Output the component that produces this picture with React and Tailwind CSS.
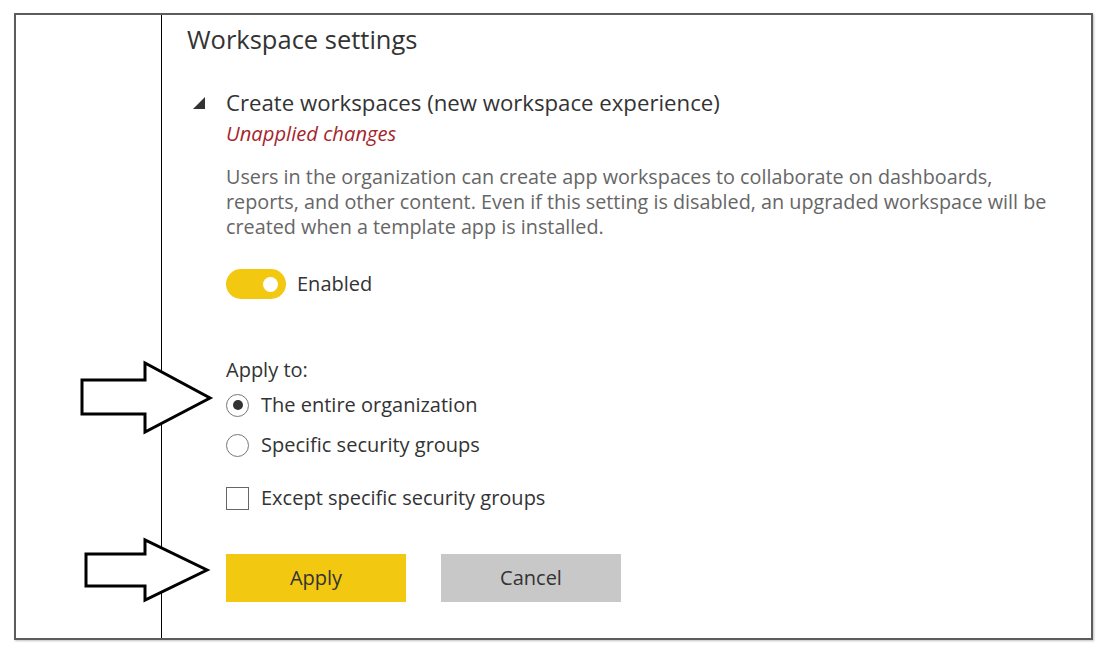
import React, { useState } from 'react';

const font = { fontFamily: '"Open Sans", "Noto Sans", sans-serif' };

const Radio = ({ checked, label, onClick }) => (
  <button type="button" onClick={onClick} className="flex items-center h-[26px] text-left">
    <span className="w-[23px] h-[23px] rounded-full border border-[#777] bg-white flex items-center justify-center">
      {checked && <span className="w-[10px] h-[10px] rounded-full bg-[#333]" />}
    </span>
    <span className="ml-[12px] text-[20px] text-[#333] leading-[26px]">{label}</span>
  </button>
);

export default function App() {
  const [enabled, setEnabled] = useState(true);
  const [scope, setScope] = useState('org');
  const [except, setExcept] = useState(false);

  return (
    <div className="relative w-[1102px] h-[652px] bg-white overflow-hidden" style={font}>
      <div className="absolute left-[14px] top-[13px] w-[1079px] h-[627px] border-2 border-[#5c5c5c] shadow-[1px_1px_2px_rgba(0,0,0,0.25)] flex">
        <div className="w-[146px] shrink-0 border-r border-black" />

        <div className="flex flex-col pl-[25px] pt-[8px]">
          <h1 className="text-[25.5px] leading-[32px] text-[#333]">Workspace settings</h1>

          <div className="mt-[34px] flex items-center h-[28px]">
            <svg width="13" height="12" viewBox="0 0 13 12" className="ml-[6px] mr-[20px]">
              <polygon points="12,0 12,12 0,12" fill="#333" />
            </svg>
            <span className="text-[22.2px] leading-[28px] text-[#333] whitespace-nowrap">
              Create workspaces (new workspace experience)
            </span>
          </div>

          <div className="ml-[39px] flex flex-col">
            <span className="mt-[4px] text-[20.2px] leading-[24px] italic text-[#a4262c]">
              Unapplied changes
            </span>

            <p className="mt-[19px] text-[19.8px] leading-[25px] text-[#666] whitespace-nowrap">
              Users in the organization can create app workspaces to collaborate on dashboards,
              <br />
              reports, and other content. Even if this setting is disabled, an upgraded workspace will be
              <br />
              created when a template app is installed.
            </p>

            <div className="mt-[30px] flex items-center">
              <button
                type="button"
                onClick={() => setEnabled(!enabled)}
                className={`w-[60px] h-[30px] rounded-full flex items-center px-[8px] ${enabled ? 'bg-[#f2c811] justify-end' : 'bg-[#ccc] justify-start'}`}
              >
                <span className="w-[15px] h-[15px] rounded-full bg-white" />
              </button>
              <span className="ml-[11px] text-[20px] leading-[26px] text-[#333]">
                {enabled ? 'Enabled' : 'Disabled'}
              </span>
            </div>

            <span className="mt-[58px] text-[20px] leading-[26px] text-[#333]">Apply to:</span>

            <div className="mt-[9px] flex flex-col gap-[14px]">
              <Radio checked={scope === 'org'} label="The entire organization" onClick={() => setScope('org')} />
              <Radio checked={scope === 'groups'} label="Specific security groups" onClick={() => setScope('groups')} />
            </div>

            <button type="button" onClick={() => setExcept(!except)} className="mt-[27px] flex items-center h-[26px] text-left">
              <span className="w-[23px] h-[23px] border border-[#666] bg-white flex items-center justify-center text-[14px] text-[#333]">
                {except ? '✓' : ''}
              </span>
              <span className="ml-[12px] text-[20px] text-[#333] leading-[26px]">Except specific security groups</span>
            </button>

            <div className="mt-[43px] flex gap-[35px]">
              <button type="button" className="w-[180px] h-[48px] bg-[#f2c811] text-[20px] text-[#333]">
                Apply
              </button>
              <button type="button" className="w-[180px] h-[48px] bg-[#c8c8c8] text-[20px] text-[#333]">
                Cancel
              </button>
            </div>
          </div>
        </div>
      </div>

      <svg className="absolute inset-0 pointer-events-none" width="1102" height="652">
        <polygon
          points="82,380 145,380 145,363 210,398 145,432 145,414 82,414"
          fill="white"
          stroke="black"
          strokeWidth="3"
          strokeLinejoin="miter"
        />
        <polygon
          points="86,554 145,554 145,540 207,570 145,600 145,586 86,586"
          fill="white"
          stroke="black"
          strokeWidth="3"
          strokeLinejoin="miter"
        />
      </svg>
    </div>
  );
}
